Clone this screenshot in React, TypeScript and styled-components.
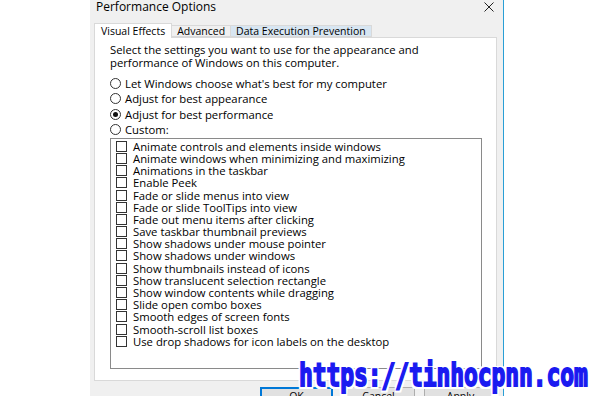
import React from 'react'
import styled, { createGlobalStyle } from 'styled-components'

const GlobalStyle = createGlobalStyle`
  html, body {
    margin: 0;
    padding: 0;
    background: #ffffff;
  }
  #root {
    width: 596px;
    height: 396px;
    overflow: hidden;
  }
`

const Page = styled.div`
  position: relative;
  width: 596px;
  height: 396px;
  display: flex;
  background: #ffffff;
  font-family: 'Open Sans', 'Noto Sans', sans-serif;
  font-size: 11.3px;
  color: #000;
  overflow: hidden;
`

const Spacer = styled.div`
  width: 90px;
  flex-shrink: 0;
`

const Dialog = styled.div`
  width: 414px;
  flex-shrink: 0;
  background: #f0f0f0;
  border-right: 1px solid #2a9fd6;
  display: flex;
  flex-direction: column;
  padding-left: 4px;
  box-sizing: border-box;
  overflow: hidden;

  & > * {
    flex-shrink: 0;
  }
`

const TitleBar = styled.div`
  height: 22px;
  display: flex;
  align-items: flex-start;
  justify-content: space-between;
  padding: 0 9px 0 2px;
  font-size: 12px;
  line-height: 14px;
`

const CloseIcon = styled.svg`
  width: 10px;
  height: 10px;
  margin-top: 2px;
`

const TabArea = styled.div`
  width: 403px;
  display: flex;
  flex-direction: column;
`

const TabStrip = styled.div`
  height: 15px;
  display: flex;
  align-items: flex-end;
`

const Tab = styled.div<{ $active?: boolean; $hover?: boolean }>`
  height: ${p => (p.$active ? '15px' : '12px')};
  padding: 0 ${p => (p.$active ? '6px' : '5px')};
  box-sizing: border-box;
  display: flex;
  align-items: center;
  border: 1px solid #d9d9d9;
  border-bottom: ${p => (p.$active ? 'none' : '1px solid #d9d9d9')};
  background: ${p => (p.$active ? '#ffffff' : p.$hover ? '#d8e6f2' : '#f0f0f0')};
  margin-left: ${p => (p.$active ? '0' : '-1px')};
  margin-bottom: ${p => (p.$active ? '-1px' : '0')};
  position: relative;
  z-index: ${p => (p.$active ? 1 : 0)};
  font-size: 10.5px;
`

const Panel = styled.div`
  height: 344px;
  flex-shrink: 0;
  background: #ffffff;
  border: 1px solid #d9d9d9;
  box-sizing: border-box;
  padding: 5px 14px 0 15px;
  display: flex;
  flex-direction: column;

  & > * {
    flex-shrink: 0;
  }
`

const Intro = styled.p`
  margin: 0;
  line-height: 13px;
  width: 345px;
`

const RadioGroup = styled.div`
  margin-top: 7px;
  display: flex;
  flex-direction: column;
`

const RadioRow = styled.label`
  height: 15.3px;
  display: flex;
  align-items: center;
  gap: 4px;
`

const RadioCircle = styled.span<{ $checked?: boolean }>`
  width: 9px;
  height: 9px;
  border: 1px solid #333;
  border-radius: 50%;
  display: flex;
  align-items: center;
  justify-content: center;
  flex-shrink: 0;
  &::after {
    content: '';
    width: 5px;
    height: 5px;
    border-radius: 50%;
    background: ${p => (p.$checked ? '#111' : 'transparent')};
  }
`

const ListBox = styled.div`
  margin-top: 1px;
  width: 372px;
  height: 231px;
  box-sizing: border-box;
  border: 1px solid #8a8a8a;
  padding: 1px 0 0 5px;
  display: flex;
  flex-direction: column;
`

const CheckRow = styled.label`
  height: 12.2px;
  flex-shrink: 0;
  display: flex;
  align-items: center;
  gap: 6px;
  white-space: nowrap;
`

const CheckBox = styled.span`
  width: 9px;
  height: 9px;
  border: 1px solid #333;
  flex-shrink: 0;
`

const ButtonRow = styled.div`
  width: 403px;
  margin-top: 6px;
  display: flex;
  justify-content: flex-end;
  gap: 9px;
`

const Button = styled.div<{ $default?: boolean }>`
  width: 73px;
  height: 21px;
  box-sizing: border-box;
  border: 1px solid ${p => (p.$default ? '#0078d7' : '#adadad')};
  box-shadow: ${p => (p.$default ? 'inset 0 0 0 1px #0078d7' : 'none')};
  background: #e1e1e1;
  display: flex;
  justify-content: center;
  padding-top: 1px;
  font-size: 10.5px;
`

const Watermark = styled.div`
  position: absolute;
  left: 299px;
  top: 357px;
  font-family: 'DejaVu Sans Mono', monospace;
  font-weight: 700;
  font-size: 23px;
  letter-spacing: -0.1px;
  color: #1a1af0;
  -webkit-text-stroke: 1.3px #1a1af0;
  transform: scaleY(1.4);
  transform-origin: left top;
  text-shadow:
    2px 0 0 #fff, -2px 0 0 #fff, 0 2px 0 #fff, 0 -2px 0 #fff,
    2px 2px 0 #fff, -2px -2px 0 #fff, 2px -2px 0 #fff, -2px 2px 0 #fff;
  white-space: nowrap;
`

const options = [
  { label: "Let Windows choose what's best for my computer", checked: false },
  { label: 'Adjust for best appearance', checked: false },
  { label: 'Adjust for best performance', checked: true },
  { label: 'Custom:', checked: false }
]

const effects = [
  'Animate controls and elements inside windows',
  'Animate windows when minimizing and maximizing',
  'Animations in the taskbar',
  'Enable Peek',
  'Fade or slide menus into view',
  'Fade or slide ToolTips into view',
  'Fade out menu items after clicking',
  'Save taskbar thumbnail previews',
  'Show shadows under mouse pointer',
  'Show shadows under windows',
  'Show thumbnails instead of icons',
  'Show translucent selection rectangle',
  'Show window contents while dragging',
  'Slide open combo boxes',
  'Smooth edges of screen fonts',
  'Smooth-scroll list boxes',
  'Use drop shadows for icon labels on the desktop'
]

const App: React.FC = () => {
  return (
    <>
      <GlobalStyle />
      <Page>
        <Spacer />
        <Dialog>
          <TitleBar>
            <span>Performance Options</span>
            <CloseIcon viewBox="0 0 10 10">
              <path d="M0.5 0.5 L9.5 9.5 M9.5 0.5 L0.5 9.5" stroke="#222" strokeWidth="1" />
            </CloseIcon>
          </TitleBar>
          <TabArea>
            <TabStrip>
              <Tab $active>Visual Effects</Tab>
              <Tab>Advanced</Tab>
              <Tab $hover>Data Execution Prevention</Tab>
            </TabStrip>
            <Panel>
              <Intro>
                Select the settings you want to use for the appearance and performance of Windows on this computer.
              </Intro>
              <RadioGroup>
                {options.map(o => (
                  <RadioRow key={o.label}>
                    <RadioCircle $checked={o.checked} />
                    {o.label}
                  </RadioRow>
                ))}
              </RadioGroup>
              <ListBox>
                {effects.map(e => (
                  <CheckRow key={e}>
                    <CheckBox />
                    {e}
                  </CheckRow>
                ))}
              </ListBox>
            </Panel>
          </TabArea>
          <ButtonRow>
            <Button $default>OK</Button>
            <Button>Cancel</Button>
            <Button>Apply</Button>
          </ButtonRow>
        </Dialog>
        <Watermark>https://tinhocpnn.com</Watermark>
      </Page>
    </>
  )
}

export default App
